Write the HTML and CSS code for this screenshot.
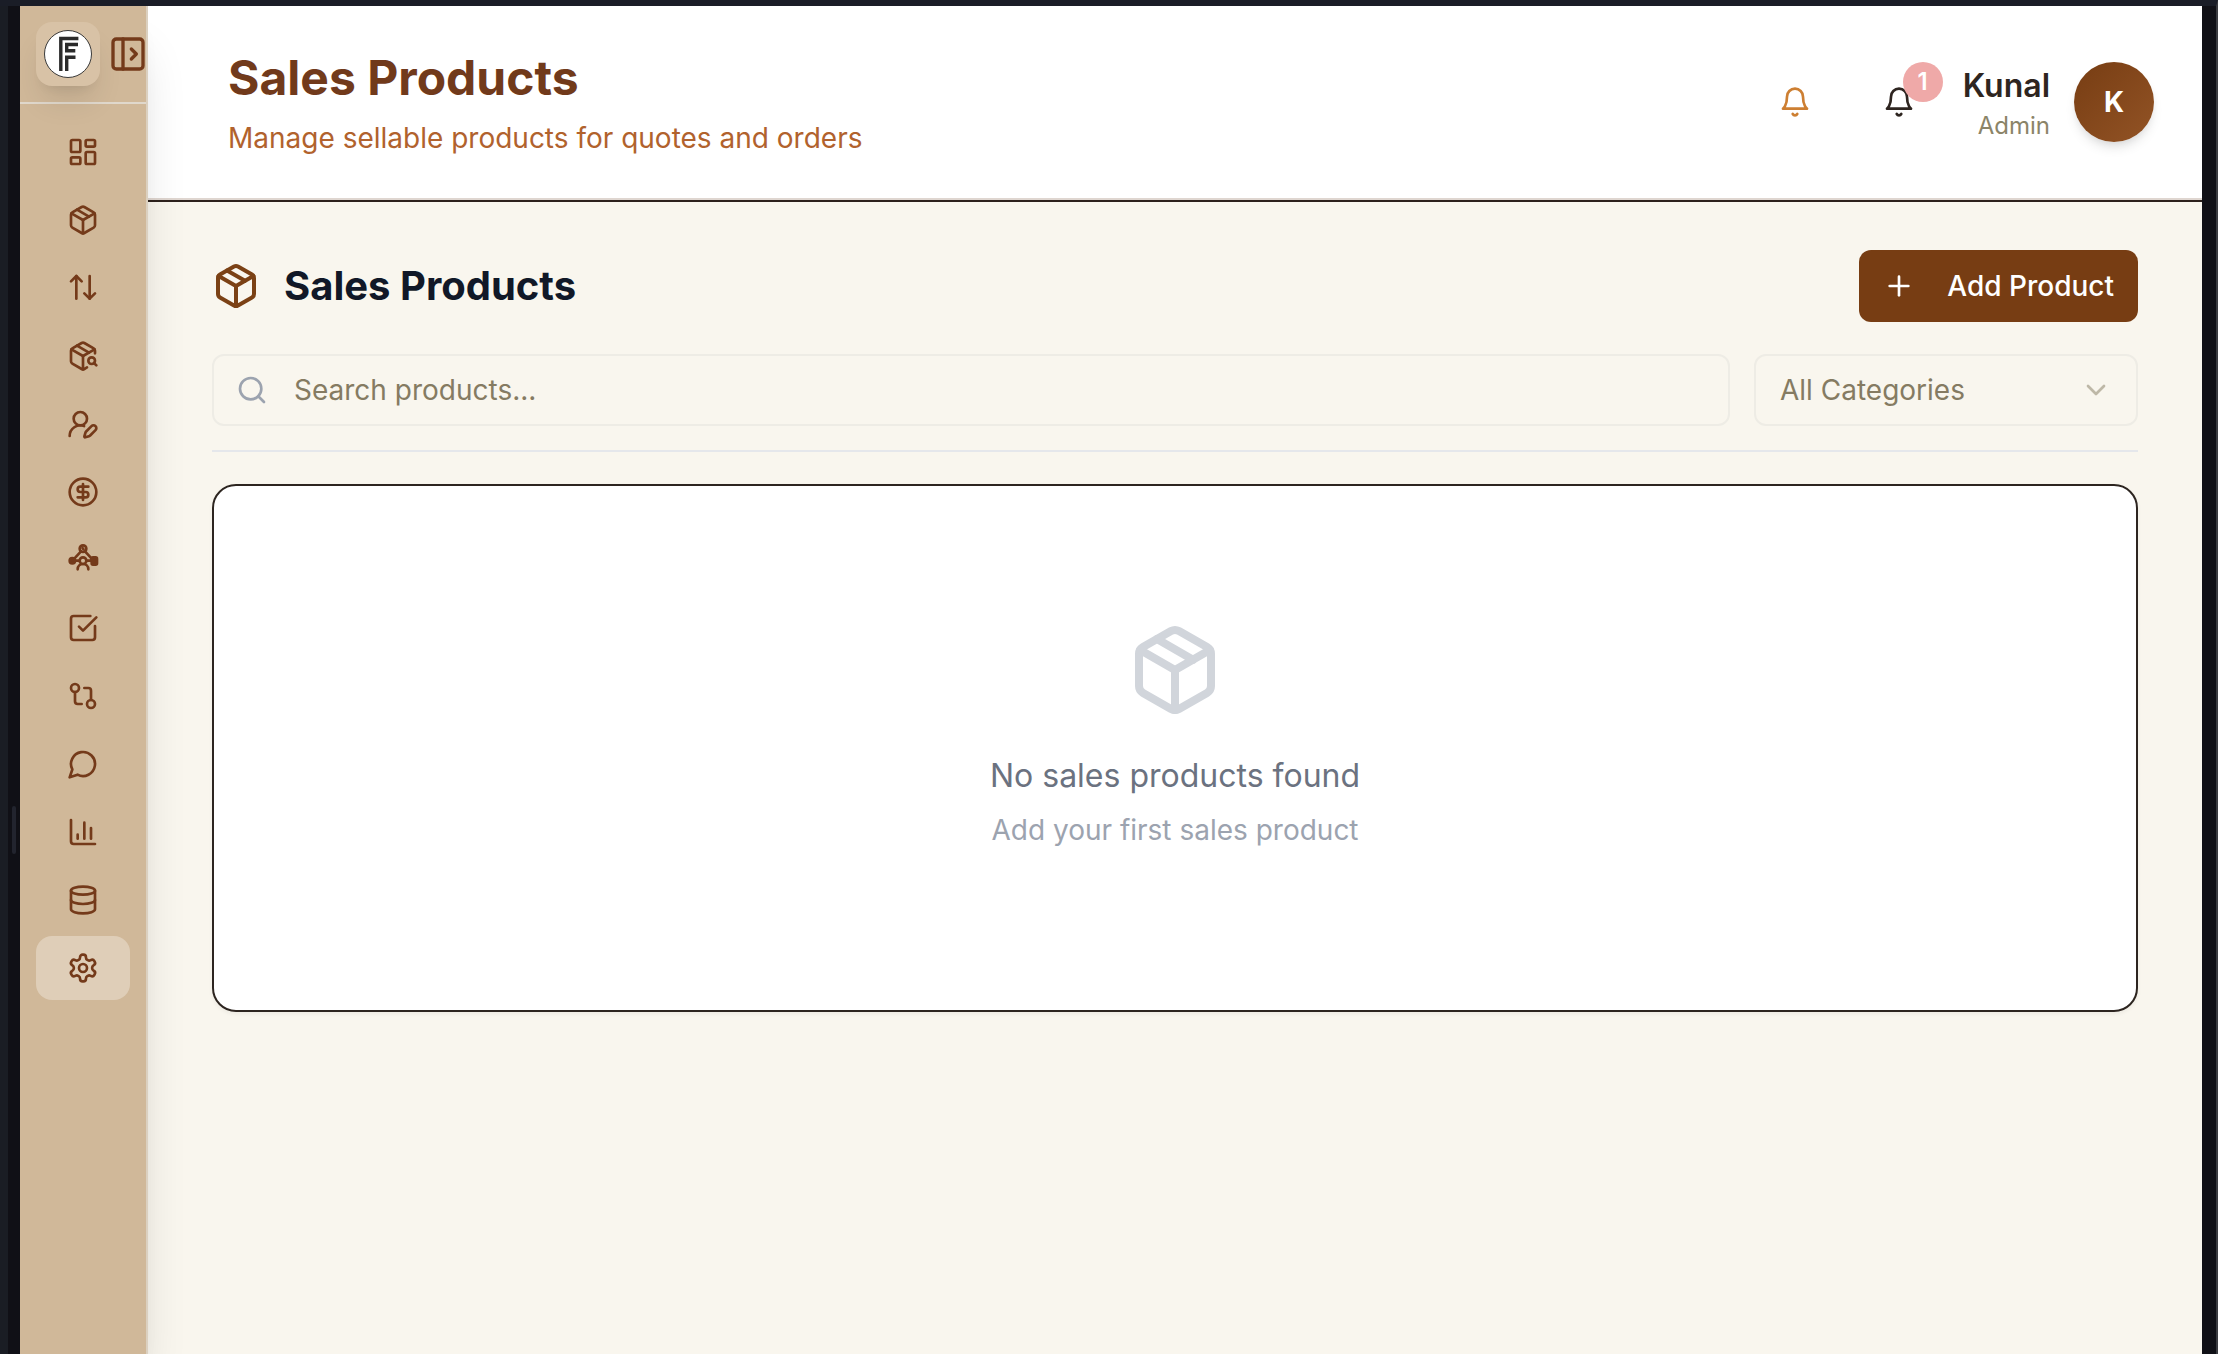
FILE: index.html
```html
<!DOCTYPE html>
<html lang="en">
<head>
<meta charset="utf-8">
<meta name="viewport" content="width=device-width, initial-scale=1">
<title>Sales Products</title>
<link rel="stylesheet" href="styles.css">
</head>
<body>
<svg class="sprite" aria-hidden="true">
  <symbol id="package" viewBox="0 0 24 24"><path d="m7.5 4.27 9 5.15"/><path d="M21 8a2 2 0 0 0-1-1.73l-7-4a2 2 0 0 0-2 0l-7 4A2 2 0 0 0 3 8v8a2 2 0 0 0 1 1.73l7 4a2 2 0 0 0 2 0l7-4A2 2 0 0 0 21 16Z"/><path d="m3.3 7 8.7 5 8.7-5"/><path d="M12 22V12"/></symbol>
  <symbol id="bell" viewBox="0 0 24 24"><path d="M6 8a6 6 0 0 1 12 0c0 7 3 9 3 9H3s3-2 3-9"/><path d="M10.3 21a1.94 1.94 0 0 0 3.4 0"/></symbol>
</svg>
<div class="frame">
  <div class="rail"><span class="grip"></span></div>
  <div class="app">
    <aside class="sidebar">
      <div class="brand">
        <a class="logo" href="#" aria-label="Home">
          <svg viewBox="0 0 48 48"><circle cx="24" cy="24" r="23.5" fill="#fff" stroke="#3a3a3a"/><g fill="none" stroke="#2b2b2b" stroke-width="3.4"><path d="M16.8 41V8.500H34.400"/><path d="M34 14.500H22.700V20.800H31.300"/><path d="M22.700 41V27.300H31.500"/></g></svg>
        </a>
        <button class="toggle" type="button" aria-label="Expand sidebar"><svg class="icon icon-md" viewBox="0 0 24 24"><rect width="18" height="18" x="3" y="3" rx="2"/><path d="M9 3v18"/><path d="m14 9 3 3-3 3"/></svg></button>
      </div>
      <nav class="nav" aria-label="Main">
        <a href="#" aria-label="Dashboard"><svg class="icon" viewBox="0 0 24 24"><rect width="7" height="9" x="3" y="3" rx="1"/><rect width="7" height="5" x="14" y="3" rx="1"/><rect width="7" height="9" x="14" y="12" rx="1"/><rect width="7" height="5" x="3" y="16" rx="1"/></svg></a>
        <a href="#" aria-label="Products"><svg class="icon"><use href="#package"/></svg></a>
        <a href="#" aria-label="Stock movement"><svg class="icon" viewBox="0 0 24 24"><path d="m3 7 4-4 4 4"/><path d="M7 3v17"/><path d="m13 16 4 4 4-4"/><path d="M17 3v17"/></svg></a>
        <a href="#" aria-label="Product search"><svg class="icon" viewBox="0 0 24 24"><path d="M21 10V8a2 2 0 0 0-1-1.73l-7-4a2 2 0 0 0-2 0l-7 4A2 2 0 0 0 3 8v8a2 2 0 0 0 1 1.73l7 4a2 2 0 0 0 2 0l2-1.14"/><path d="m7.5 4.27 9 5.15"/><path d="M3.29 7 12 12l8.710-5"/><path d="M12 22V12"/><circle cx="18.5" cy="15.5" r="2.5"/><path d="M20.27 17.27 22 19"/></svg></a>
        <a href="#" aria-label="Customers"><svg class="icon" viewBox="0 0 24 24"><path d="M2 21a8 8 0 0 1 10.821-7.487"/><path d="M21.378 16.626a1 1 0 0 0-3.004-3.004l-4.01 4.012a2 2 0 0 0-.506.854l-.837 2.87a.5.5 0 0 0 .62.62l2.87-.837a2 2 0 0 0 .854-.506z"/><circle cx="10" cy="8" r="5"/></svg></a>
        <a href="#" aria-label="Finance"><svg class="icon" viewBox="0 0 24 24"><circle cx="12" cy="12" r="10"/><path d="M16 8h-6a2 2 0 1 0 0 4h4a2 2 0 1 1 0 4H8"/><path d="M12 18V6"/></svg></a>
        <a href="#" aria-label="Network"><svg class="icon" viewBox="0 0 24 24"><circle cx="12" cy="3.5" r="2.5"/><path d="m11.600 3 .8 1"/><path d="m10.5 5.5-5 5.5M13.500 5.500l5 5.500M5 12.500h4M15 12.500h4"/><circle cx="4" cy="12.500" r="2" fill="currentColor"/><rect x="18.500" y="10" width="4" height="5.500" rx="1" fill="currentColor"/><circle cx="12" cy="12.500" r="2.500"/><path d="M8 19a4 4 0 0 1 8 0"/></svg></a>
        <a href="#" aria-label="Tasks"><svg class="icon" viewBox="0 0 24 24"><path d="M21 10.500V19a2 2 0 0 1-2 2H5a2 2 0 0 1-2-2V5a2 2 0 0 1 2-2h12.500"/><path d="m9 11 3 3L22 4"/></svg></a>
        <a href="#" aria-label="Workflows"><svg class="icon" viewBox="0 0 24 24"><circle cx="18" cy="18" r="3"/><circle cx="6" cy="6" r="3"/><path d="M13 6h3a2 2 0 0 1 2 2v7"/><path d="M11 18H8a2 2 0 0 1-2-2V9"/></svg></a>
        <a href="#" aria-label="Messages"><svg class="icon" viewBox="0 0 24 24"><path d="M7.9 20A9 9 0 1 0 4 16.1L2 22Z"/></svg></a>
        <a href="#" aria-label="Reports"><svg class="icon" viewBox="0 0 24 24"><path d="M3 3v16a2 2 0 0 0 2 2h16"/><path d="M18 17V9"/><path d="M13 17V5"/><path d="M8 17v-3"/></svg></a>
        <a href="#" aria-label="Data"><svg class="icon" viewBox="0 0 24 24"><ellipse cx="12" cy="5" rx="9" ry="3"/><path d="M3 5v14a9 3 0 0 0 18 0V5"/><path d="M3 12a9 3 0 0 0 18 0"/></svg></a>
        <a href="#" class="active" aria-current="page" aria-label="Settings"><svg class="icon" viewBox="0 0 24 24"><path d="M12.22 2h-.44a2 2 0 0 0-2 2v.18a2 2 0 0 1-1 1.73l-.43.25a2 2 0 0 1-2 0l-.15-.08a2 2 0 0 0-2.73.73l-.22.38a2 2 0 0 0 .73 2.73l.15.1a2 2 0 0 1 1 1.72v.51a2 2 0 0 1-1 1.74l-.15.09a2 2 0 0 0-.73 2.73l.22.38a2 2 0 0 0 2.73.73l.15-.08a2 2 0 0 1 2 0l.43.25a2 2 0 0 1 1 1.73V20a2 2 0 0 0 2 2h.44a2 2 0 0 0 2-2v-.18a2 2 0 0 1 1-1.73l.43-.25a2 2 0 0 1 2 0l.15.08a2 2 0 0 0 2.73-.73l.22-.39a2 2 0 0 0-.73-2.73l-.15-.08a2 2 0 0 1-1-1.74v-.5a2 2 0 0 1 1-1.74l.15-.09a2 2 0 0 0 .73-2.73l-.22-.38a2 2 0 0 0-2.73-.73l-.15.08a2 2 0 0 1-2 0l-.43-.25a2 2 0 0 1-1-1.73V4a2 2 0 0 0-2-2z"/><circle cx="12" cy="12" r="3"/></svg></a>
      </nav>
    </aside>
    <div class="page">
      <header class="topbar">
        <div class="titles">
          <h1>Sales Products</h1>
          <p>Manage sellable products for quotes and orders</p>
        </div>
        <div class="account">
          <button class="bell bell-alert" type="button" aria-label="Alerts"><svg class="icon"><use href="#bell"/></svg></button>
          <button class="bell" type="button" aria-label="Notifications"><svg class="icon"><use href="#bell"/></svg><span class="badge">1</span></button>
          <div class="user"><strong>Kunal</strong><span>Admin</span></div>
          <div class="avatar">K</div>
        </div>
      </header>
      <main class="content">
        <div class="toolbar">
          <h2><svg class="icon icon-lg"><use href="#package"/></svg>Sales Products</h2>
          <button class="add" type="button"><svg class="icon" viewBox="0 0 24 24"><path d="M5 12h14"/><path d="M12 5v14"/></svg>Add Product</button>
        </div>
        <div class="filters">
          <label class="field search"><svg class="icon" viewBox="0 0 24 24"><circle cx="11" cy="11" r="8"/><path d="m21 21-4.3-4.3"/></svg><input type="search" placeholder="Search products..." aria-label="Search products"></label>
          <label class="field category"><select aria-label="Category"><option>All Categories</option></select><svg class="icon" viewBox="0 0 24 24"><path d="m6 9 6 6 6-6"/></svg></label>
        </div>
        <section class="empty">
          <svg class="icon icon-xl"><use href="#package"/></svg>
          <p class="empty-title">No sales products found</p>
          <p class="empty-hint">Add your first sales product</p>
        </section>
      </main>
    </div>
  </div>
</div>
</body>
</html>
```
FILE: styles.css
```css
*, *::before, *::after { box-sizing: border-box; }

body {
  margin: 0;
  background: #101016;
  color: #2e2520;
  font: 28px/40px Inter, "Liberation Sans", sans-serif;
}

h1, h2, p { margin: 0; }
a { color: inherit; text-decoration: none; }

button, input, select {
  margin: 0;
  padding: 0;
  border: 0;
  background: none;
  color: inherit;
  font: inherit;
}

.sprite { position: absolute; width: 0; height: 0; }

.icon {
  flex: none;
  display: block;
  width: 32px;
  height: 32px;
  fill: none;
  stroke: currentColor;
  stroke-width: 2;
  stroke-linecap: round;
  stroke-linejoin: round;
}
.icon-md { width: 40px; height: 40px; }
.icon-lg { width: 48px; height: 48px; }
.icon-xl { width: 96px; height: 96px; }

/* window frame */
.frame {
  display: flex;
  min-height: 100vh;
  border-top: 6px solid #1a1d27;
  border-right: 2px solid #3a3b40;
}
.rail {
  flex: none;
  display: flex;
  align-items: center;
  justify-content: center;
  width: 20px;
  padding-top: 300px;
  border-left: 8px solid #1a1d24;
}
.grip { width: 4px; height: 48px; border-radius: 2px; background: #22242e; }
.app {
  flex: 1;
  display: flex;
  min-width: 0;
  margin-right: 14px;
  background: #f9f6ee;
  overflow: hidden;
}

/* sidebar */
.sidebar {
  position: relative;
  z-index: 1;
  flex: none;
  width: 128px;
  border-right: 2px solid #dbd0c0;
  background: #d0b899;
  color: #743a1a;
  box-shadow: 0 40px 50px -10px rgba(0, 0, 0, .14), 0 16px 20px -12px rgba(0, 0, 0, .1);
}
.brand {
  display: flex;
  align-items: center;
  gap: 8px;
  height: 98px;
  padding-left: 16px;
  border-bottom: 2px solid #e0d8cc;
}
.logo {
  flex: none;
  width: 64px;
  height: 64px;
  padding: 8px;
  border-radius: 16px;
  background: #d8c2a6;
  box-shadow: 0 20px 30px -6px rgba(0, 0, 0, .1), 0 8px 12px -8px rgba(0, 0, 0, .1);
}
.logo svg { display: block; width: 48px; height: 48px; }
.nav {
  display: flex;
  flex-direction: column;
  gap: 4px;
  padding: 16px;
}
.nav a {
  display: flex;
  align-items: center;
  justify-content: center;
  height: 64px;
  border-radius: 16px;
}
.nav .active { background: #dfceb8; }

/* top bar */
.page { flex: 1; min-width: 0; }
.topbar {
  display: flex;
  align-items: center;
  justify-content: space-between;
  padding: 40px 48px 42px 80px;
  border-bottom: 2px solid #2d211c;
  background: #fff;
  box-shadow: inset 0 -2px #dfd6d0;
}
.titles h1 { margin-bottom: 8px; color: #713a1b; font-size: 48px; line-height: 64px; }
.titles p { color: #b1622d; }
.account { display: flex; align-items: center; gap: 24px; }
.bell {
  position: relative;
  display: flex;
  align-items: center;
  justify-content: center;
  width: 80px;
  height: 80px;
}
.bell-alert { color: #cd7f32; }
.badge {
  position: absolute;
  top: 0;
  right: -4px;
  width: 40px;
  border-radius: 50%;
  background: #efa9a8;
  color: #fff;
  font-size: 24px;
  font-weight: 600;
  text-align: center;
}
.user { display: flex; flex-direction: column; text-align: right; }
.user strong { font-size: 32px; font-weight: 600; line-height: 48px; }
.user span { color: #8b8468; font-size: 24px; line-height: 32px; }
.avatar {
  width: 80px;
  border-radius: 50%;
  background: linear-gradient(135deg, #773d13, #925325);
  box-shadow: 0 8px 12px -2px rgba(0, 0, 0, .1), 0 4px 8px -4px rgba(0, 0, 0, .1);
  color: #fff;
  font-weight: 700;
  line-height: 80px;
  text-align: center;
}

/* content */
.content { padding: 48px 64px; }
.toolbar {
  display: flex;
  align-items: center;
  justify-content: space-between;
  margin-bottom: 32px;
}
.toolbar h2 {
  display: flex;
  align-items: center;
  gap: 24px;
  color: #111827;
  font-size: 40px;
  line-height: 56px;
}
.toolbar h2 .icon { color: #7b4115; }
.add {
  display: flex;
  align-items: center;
  gap: 32px;
  height: 72px;
  padding: 0 24px;
  border-radius: 12px;
  background: #773d13;
  color: #fff;
  font-weight: 500;
}
.filters {
  display: flex;
  gap: 24px;
  margin-bottom: 32px;
  padding-bottom: 24px;
  border-bottom: 2px solid #e5e7eb;
}
.field {
  display: flex;
  align-items: center;
  height: 72px;
  padding: 0 24px;
  border: 2px solid #eeece5;
  border-radius: 12px;
  color: #857b62;
}
.search { flex: 1; gap: 26px; padding-left: 22px; }
.search .icon { color: #9ca3af; }
.search input { flex: 1; min-width: 0; outline: 0; appearance: none; }
.search input::placeholder { color: #857b62; opacity: 1; }
.category { width: 384px; }
.category select { flex: 1; min-width: 0; outline: 0; appearance: none; }
.category .icon { opacity: .5; }
.empty {
  display: flex;
  flex-direction: column;
  align-items: center;
  padding: 136px 32px 160px;
  border: 2px solid #2d2520;
  border-radius: 24px;
  background: #fff;
  box-shadow: 0 2px 4px rgba(0, 0, 0, .05);
  text-align: center;
}
.empty .icon { color: #d1d5db; }
.empty-title { margin: 32px 0 8px; color: #6b7280; font-size: 32px; line-height: 52px; }
.empty-hint { color: #9ca3af; }
```
